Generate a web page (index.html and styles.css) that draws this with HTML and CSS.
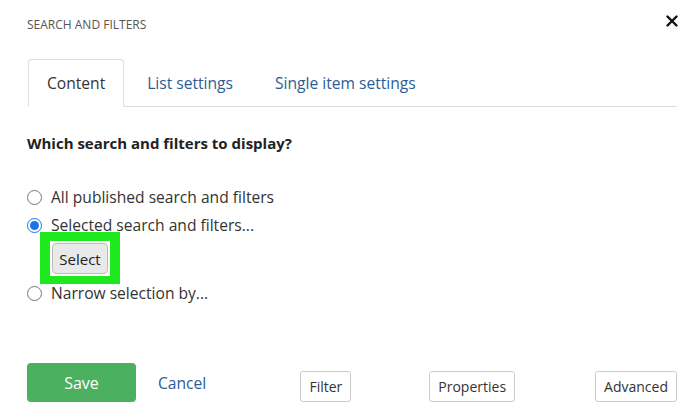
FILE: index.html
```html
<!DOCTYPE html>
<html lang="en">
<head>
    <meta charset="UTF-8">
    <meta name="viewport" content="width=device-width, initial-scale=1.0">
    <title>Search and filters</title>
    <link rel="stylesheet" href="styles.css">
</head>
<body>
    <div class="dialog">
        <div class="dialog-header">
            <span class="dialog-title">SEARCH AND FILTERS</span>
            <svg class="dialog-close" width="12" height="12" viewBox="0 0 12 12">
                <path d="M1.5 1.5 L10.5 10.5 M10.5 1.5 L1.5 10.5" stroke="#111" stroke-width="2.4" stroke-linecap="round"/>
            </svg>
        </div>

        <ul class="tabs">
            <li class="tab active">Content</li>
            <li class="tab">List settings</li>
            <li class="tab">Single item settings</li>
        </ul>

        <h3 class="question">Which search and filters to display?</h3>

        <div class="options">
            <label class="option"><input type="radio" name="mode"> All published search and filters</label>
            <label class="option"><input type="radio" name="mode" checked> Selected search and filters...</label>
            <div class="select-wrap">
                <span class="highlight"><button class="btn-select">Select</button></span>
            </div>
            <label class="option"><input type="radio" name="mode"> Narrow selection by...</label>
        </div>

        <div class="dialog-footer">
            <button class="btn-save">Save</button>
            <a class="link-cancel">Cancel</a>
            <button class="btn-small btn-filter">Filter</button>
            <button class="btn-small btn-props">Properties</button>
            <button class="btn-small btn-adv">Advanced</button>
        </div>
    </div>
</body>
</html>
```

FILE: styles.css
```css
* {
    margin: 0;
    padding: 0;
    box-sizing: border-box;
}

body {
    font-family: 'Open Sans', 'Noto Sans', sans-serif;
    background: #fff;
    color: #333;
    overflow: hidden;
}

.dialog {
    width: 700px;
    height: 417px;
    padding: 0 23px 0 27px;
}

.dialog-header {
    display: flex;
    justify-content: space-between;
    align-items: center;
    height: 50px;
    padding-bottom: 1px;
}

.dialog-title {
    font-size: 12px;
    color: #555;
}

.dialog-close {
    display: block;
    margin-right: -1px;
    margin-top: -8px;
}

.tabs {
    list-style: none;
    display: flex;
    margin-top: 9px;
    margin-left: 1px;
    border-bottom: 1px solid #ddd;
}

.tab {
    height: 48px;
    padding: 0 18px;
    margin-right: 4px;
    display: flex;
    align-items: center;
    font-size: 15.6px;
    color: #2b5c96;
    border: 1px solid transparent;
    border-radius: 4px 4px 0 0;
    margin-bottom: -1px;
}

.tab.active {
    color: #333;
    border-color: #ddd;
    border-bottom-color: #fff;
    background: #fff;
}

.question {
    font-size: 15px;
    font-weight: bold;
    color: #222;
    margin-top: 26px;
}

.options {
    margin-top: 30px;
}

.option {
    display: flex;
    align-items: center;
    font-size: 15.6px;
    color: #333;
    height: 28px;
}

.option input {
    width: 15px;
    height: 15px;
    margin: 0 9px 0 0;
    accent-color: #1a73e8;
}

/* the highlighted button sits tight under the selected option */
.select-wrap {
    margin-top: -7px;
    padding-left: 13px;
    height: 47px;
    position: relative;
}

.highlight {
    display: inline-block;
    border: 10px solid #1ee81e;
    border-top-width: 9px;
    border-bottom-width: 8px;
    padding: 2px;
    background: #fff;
    line-height: 0;
}

.btn-select {
    font-family: inherit;
    font-size: 15px;
    color: #222;
    background: #e9e9e9;
    border: 1px solid #bbb;
    border-radius: 4px;
    width: 56px;
    height: 31px;
}

.dialog-footer {
    display: flex;
    align-items: center;
    margin-top: 56px;
}

.btn-save {
    font-family: inherit;
    font-size: 16px;
    color: #fff;
    background: #4cb061;
    border: none;
    border-radius: 4px;
    width: 109px;
    height: 39px;
}

.link-cancel {
    font-size: 15.6px;
    color: #2b5c96;
    margin-left: 22px;
}

.btn-small {
    font-family: inherit;
    font-size: 14px;
    color: #333;
    background: #fff;
    border: 1px solid #ccc;
    border-radius: 3px;
    height: 31px;
    padding: 0 8px;
    margin-top: 8px;
}

.btn-filter {
    margin-left: auto;
}

.btn-props {
    margin-left: 78px;
}

.btn-adv {
    margin-left: 80px;
}
```
